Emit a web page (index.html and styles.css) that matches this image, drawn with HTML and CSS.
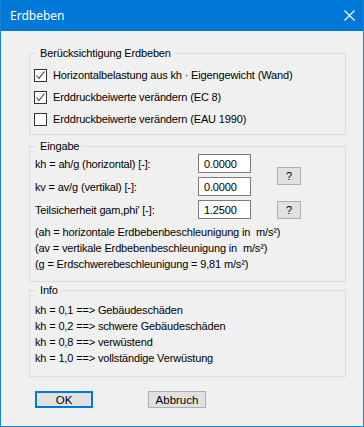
FILE: index.html
```html
<!doctype html>
<html lang="de">
<head>
    <meta charset="UTF-8">
    <title>Erdbeben</title>
    <link rel="stylesheet" href="styles.css">
</head>
<body>
<div class="window">
    <div class="titlebar">
        <span class="title">Erdbeben</span>
        <svg class="close" width="11" height="11" viewBox="0 0 11 11">
            <path d="M0.5 0.5 L10.5 10.5 M10.5 0.5 L0.5 10.5" stroke="#fff" stroke-width="1.1" fill="none"/>
        </svg>
    </div>
    <div class="content">
        <!-- Gruppe 1 -->
        <fieldset class="group group-erdbeben">
            <legend>Berücksichtigung Erdbeben</legend>
            <div class="check-row">
                <span class="checkbox checked"><svg width="11" height="11" viewBox="0 0 11 11"><path d="M1.5 5.5 L4 8.5 L9.5 1.5" stroke="#333" stroke-width="1.1" fill="none"/></svg></span>
                <span>Horizontalbelastung aus kh · Eigengewicht (Wand)</span>
            </div>
            <div class="check-row">
                <span class="checkbox checked"><svg width="11" height="11" viewBox="0 0 11 11"><path d="M1.5 5.5 L4 8.5 L9.5 1.5" stroke="#333" stroke-width="1.1" fill="none"/></svg></span>
                <span>Erddruckbeiwerte verändern (EC 8)</span>
            </div>
            <div class="check-row">
                <span class="checkbox"></span>
                <span>Erddruckbeiwerte verändern (EAU 1990)</span>
            </div>
        </fieldset>

        <!-- Gruppe 2 -->
        <fieldset class="group group-eingabe">
            <legend>Eingabe</legend>
            <div class="input-grid">
                <span class="label row-1">kh = ah/g (horizontal) [-]:</span>
                <input class="field row-1" type="text" value="0.0000">
                <button class="help help-top">?</button>
                <span class="label row-2">kv = av/g (vertikal) [-]:</span>
                <input class="field row-2" type="text" value="0.0000">
                <span class="label row-3">Teilsicherheit gam,phi' [-]:</span>
                <input class="field row-3" type="text" value="1.2500">
                <button class="help row-3">?</button>
            </div>
            <div class="notes">
                <div>(ah = horizontale Erdbebenbeschleunigung in&nbsp; m/s²)</div>
                <div>(av = vertikale Erdbebenbeschleunigung in&nbsp; m/s²)</div>
                <div>(g = Erdschwerebeschleunigung = 9,81 m/s²)</div>
            </div>
        </fieldset>

        <!-- Gruppe 3 -->
        <fieldset class="group group-info">
            <legend>Info</legend>
            <div>kh = 0,1 ==&gt; Gebäudeschäden</div>
            <div>kh = 0,2 ==&gt; schwere Gebäudeschäden</div>
            <div>kh = 0,8 ==&gt; verwüstend</div>
            <div>kh = 1,0 ==&gt; vollständige Verwüstung</div>
        </fieldset>

        <div class="buttons">
            <button class="btn btn-default">OK</button>
            <button class="btn">Abbruch</button>
        </div>
    </div>
</div>
</body>
</html>
```

FILE: styles.css
```css
body{
    margin: 0;
    font-family: "Liberation Sans", Arial, sans-serif;
    font-size: 11px;
    letter-spacing: -0.15px;
    color: #000;
}
.window{
    width: 364px;
    height: 427px;
    box-sizing: border-box;
    border: 1px solid #1883d7;
    border-top: none;
    background-color: #f0f0f0;
    overflow: hidden;
}
.titlebar{
    height: 31px;
    background-color: #0078d7;
    display: flex;
    align-items: center;
    justify-content: space-between;
    padding: 0 9px 0 9px;
    margin: 0 -1px;
    color: #fff;
}
.title{
    font-family: "Noto Sans", "Open Sans", sans-serif;
    font-size: 12px;
    letter-spacing: 0;
    padding-left: 1px;
    padding-bottom: 1px;
}
.close{
    margin-bottom: 1px;
}
.content{
    padding: 14px 0 0 28px;
}
.group{
    width: 317px;
    box-sizing: border-box;
    margin: 0;
    border: 1px solid #dcdcdc;
    padding: 0 4px;
    min-width: 0;
}
.group legend{
    line-height: 16px;
    padding: 0 3px 0 5px;
    margin-left: 1px;
}
.group-erdbeben{
    padding-top: 3px;
    padding-bottom: 4px;
}
.check-row{
    height: 22px;
    display: flex;
    align-items: center;
}
.checkbox{
    width: 11px;
    height: 11px;
    border: 1px solid #333;
    background-color: #fff;
    margin-right: 6px;
    display: flex;
}
.group-eingabe{
    margin-top: 3px;
    padding-bottom: 9px;
}
.input-grid{
    display: grid;
    grid-template-columns: 164px 53px 26px 24px;
    grid-template-rows: 19px 19px 19px;
    row-gap: 4px;
    align-items: center;
}
.row-1{ grid-row: 1; }
.row-2{ grid-row: 2; }
.row-3{ grid-row: 3; }
.label{
    grid-column: 1;
    padding-left: 1px;
    white-space: nowrap;
}
.field{
    grid-column: 2;
    width: 53px;
    height: 19px;
    box-sizing: border-box;
    border: 1px solid #7a7a7a;
    background-color: #fff;
    padding: 0 0 0 5px;
    margin: 0;
    font-family: "Liberation Sans", Arial, sans-serif;
    font-size: 11px;
    letter-spacing: -0.15px;
    color: #000;
}
.help{
    grid-column: 4;
    width: 24px;
    height: 18px;
    box-sizing: border-box;
    border: 1px solid #adadad;
    background-color: #e1e1e1;
    padding: 0;
    margin: 0;
    font-family: "Liberation Sans", Arial, sans-serif;
    font-size: 11px;
    color: #000;
}
.help-top{
    grid-row: 1 / span 2;
    margin-top: 2px;
}
.notes{
    margin-top: 5px;
    line-height: 16px;
    padding-left: 1px;
}
.group-info{
    padding-top: 4px;
    padding-bottom: 10px;
    line-height: 16px;
}
.group-info div{
    padding-left: 1px;
}
.buttons{
    margin-top: 14px;
    padding-left: 6px;
    display: flex;
    gap: 55px;
}
.btn{
    width: 58px;
    height: 17px;
    box-sizing: border-box;
    border: 1px solid #adadad;
    background-color: #e1e1e1;
    padding: 0;
    margin: 0;
    font-family: "Liberation Sans", Arial, sans-serif;
    font-size: 11.5px;
    color: #000;
}
.btn-default{
    border: 2px solid #0078d7;
}
```
